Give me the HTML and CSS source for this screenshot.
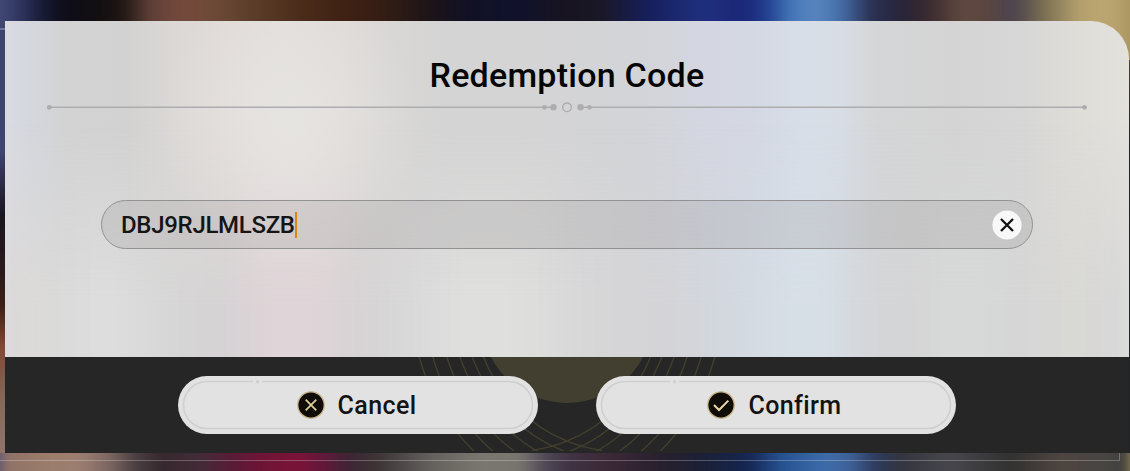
FILE: index.html
```html
<!DOCTYPE html>
<html lang="en">
<head>
    <meta charset="UTF-8">
    <title>Redemption Code</title>
    <link rel="stylesheet" href="styles.css">
</head>
<body>
    <div class="scene">
        <div class="scene-top"></div>
        <div class="scene-bottom"></div>
        <div class="scene-left"></div>
        <div class="scene-frame"></div>

        <div class="dialog">
            <div class="dialog-body">
                <h1 class="title">Redemption Code</h1>
                <svg class="divider" width="1040" height="12" viewBox="0 0 1040 12">
                    <g stroke="#adadb0" stroke-width="1.5">
                        <path d="M2 6.3H507"/>
                        <path d="M533 6.3H1038"/>
                    </g>
                    <g fill="#adadb0">
                        <circle cx="2.3" cy="6.3" r="2.4"/>
                        <circle cx="497.5" cy="6.3" r="2.4"/>
                        <circle cx="506.5" cy="6.3" r="3.2"/>
                        <circle cx="533.5" cy="6.3" r="3.2"/>
                        <circle cx="542.5" cy="6.3" r="2.4"/>
                        <circle cx="1037.5" cy="6.3" r="2.4"/>
                    </g>
                    <circle cx="520" cy="6.3" r="4.3" fill="none" stroke="#adadb0" stroke-width="1.4"/>
                </svg>

                <div class="code-field">
                    <span class="code-text">DBJ9RJLMLSZB</span>
                    <span class="caret"></span>
                    <button class="clear-btn" aria-label="Clear">
                        <svg width="30" height="30" viewBox="0 0 30 30">
                            <circle cx="15" cy="15" r="14.6" fill="#f8f8f8"/>
                            <path d="M9 9L21 21M21 9L9 21" stroke="#111" stroke-width="2.3"/>
                        </svg>
                    </button>
                </div>
            </div>

            <div class="dialog-footer">
                <svg class="orbits" width="320" height="94" viewBox="407 357 320 94">
                    <defs>
                        <clipPath id="leftArcs"><rect x="407" y="357" width="195" height="94"/></clipPath>
                        <clipPath id="rightArcs"><rect x="532" y="357" width="195" height="94"/></clipPath>
                    </defs>
                    <circle cx="567" cy="317" r="86" fill="#433f30"/>
                    <g fill="none" stroke="#423f2e" stroke-width="1.4" clip-path="url(#leftArcs)">
                        <circle cx="623" cy="302" r="211"/>
                        <circle cx="623" cy="302" r="198"/>
                        <circle cx="623" cy="302" r="184.5"/>
                        <circle cx="623" cy="302" r="172"/>
                        <circle cx="623" cy="302" r="160.5"/>
                        <circle cx="623" cy="302" r="150"/>
                    </g>
                    <g fill="none" stroke="#423f2e" stroke-width="1.4" clip-path="url(#rightArcs)">
                        <circle cx="511" cy="302" r="211"/>
                        <circle cx="511" cy="302" r="198"/>
                        <circle cx="511" cy="302" r="184.5"/>
                        <circle cx="511" cy="302" r="172"/>
                        <circle cx="511" cy="302" r="160.5"/>
                        <circle cx="511" cy="302" r="150"/>
                    </g>
                </svg>

                <button class="btn cancel">
                    <svg class="btn-line" width="360" height="58" viewBox="0 0 360 58">
                        <path d="M75 5.5H29a23.5 23.5 0 0 0 0 47H331a23.5 23.5 0 0 0 0-47H84"/>
                        <circle cx="79.5" cy="5.7" r="1.7"/>
                    </svg>
                    <svg class="btn-icon" width="28" height="28" viewBox="0 0 28 28">
                        <circle cx="14" cy="14" r="13.2" fill="#100d08" stroke="#c9b486" stroke-width="1.3"/>
                        <path d="M8.7 8.7L19.3 19.3M19.3 8.7L8.7 19.3" stroke="#e2cf9e" stroke-width="1.7"/>
                    </svg>
                    <span class="btn-label">Cancel</span>
                </button>
                <button class="btn confirm">
                    <svg class="btn-line" width="360" height="58" viewBox="0 0 360 58">
                        <path d="M74 5.5H29a23.5 23.5 0 0 0 0 47H331a23.5 23.5 0 0 0 0-47H83"/>
                        <circle cx="78.5" cy="5.7" r="1.7"/>
                    </svg>
                    <svg class="btn-icon" width="28" height="28" viewBox="0 0 28 28">
                        <circle cx="14" cy="14" r="13.2" fill="#100d08" stroke="#c9b486" stroke-width="1.3"/>
                        <path d="M7 14L12 19L21.3 9.6" fill="none" stroke="#ead7a5" stroke-width="2"/>
                    </svg>
                    <span class="btn-label">Confirm</span>
                </button>
            </div>
        </div>
    </div>
</body>
</html>
```
FILE: styles.css
```css
* {
    box-sizing: border-box;
}

body {
    margin: 0;
    font-family: Roboto, "Open Sans", sans-serif;
    overflow: hidden;
}

button {
    border: none;
    padding: 0;
    background: none;
    font-family: inherit;
    cursor: pointer;
}

svg {
    display: block;
}

/* blurred game scene behind the dialog */
.scene {
    position: relative;
    width: 1130px;
    height: 471px;
    padding: 21px 1px 18px 5px;
    overflow: hidden;
    background: linear-gradient(90deg, #454c78 0, #2f3560 20px, #151830 45px, #0e0d17 65px, #110f12 95px, #1d1412 122px, #5f4038 150px, #75493c 180px, #6d4a38 215px, #5c3e2a 250px, #4b2c1a 300px, #3e2014 350px, #331d14 385px, #1c1418 430px, #111125 470px, #10112c 520px, #171420 560px, #1a1724 600px, #161f5e 650px, #1c2a72 680px, #202f7e 705px, #1a2675 745px, #223f90 768px, #4377b8 790px, #5b86c0 815px, #4570ab 840px, #2b3154 870px, #272336 905px, #3b2b2f 930px, #604940 962px, #5b463f 985px, #4a4350 1015px, #75694f 1040px, #b5a26e 1080px, #bda672 1110px, #a8945f 1130px);
}

.scene-top {
    position: absolute;
    left: 0;
    right: 0;
    top: -30px;
    height: 150px;
    background: inherit;
    filter: blur(8px);
}

.scene-bottom {
    position: absolute;
    left: -20px;
    right: -20px;
    bottom: -30px;
    height: 130px;
    padding: 0 20px;
    background: #8f7166 linear-gradient(90deg, #8f7166 0, #9b7d6c 50px, #9b7e70 80px, #7c6661 110px, #4a3f43 135px, #35282d 162px, #422c36 200px, #5b1a37 235px, #6e1434 260px, #7a1337 300px, #60183a 325px, #3c2533 350px, #3d3637 380px, #63605d 430px, #7a7770 480px, #78756f 520px, #4f4856 545px, #3f3342 570px, #3b2836 610px, #28202e 660px, #1a2036 705px, #152653 750px, #25508f 780px, #3d6cab 825px, #3f6197 850px, #2d3b5e 875px, #33343e 900px, #48474d 950px, #313131 1010px, #4e4540 1060px, #474543 1110px, #3c3c3b 1130px) no-repeat content-box;
    filter: blur(6px);
}

.scene-left {
    position: absolute;
    left: 0;
    top: 21px;
    width: 5px;
    height: 432px;
    background: linear-gradient(#40456f 0, #3f4470 130px, #1a1420 195px, #2b1a1a 250px, #3d2015 285px, #7b4a35 325px, #85695b 380px, #907468 432px);
}

.scene-frame {
    position: absolute;
    left: -2px;
    top: 28px;
    width: 1122px;
    height: 433px;
    border: 1px solid rgba(255, 255, 255, 0.25);
    border-top-width: 2px;
    border-top-right-radius: 40px;
}

/* dark edge right of the dialog */
.scene::after {
    content: "";
    position: absolute;
    right: 0;
    top: 60px;
    width: 1px;
    height: 393px;
    background: linear-gradient(#4a3f38, #222326 80px);
}

.dialog {
    position: relative;
    height: 432px;
    display: flex;
    flex-direction: column;
    border-radius: 0 38px 0 0;
    overflow: hidden;
}

.dialog-body {
    position: relative;
    z-index: 0;
    height: 336px;
    display: flex;
    flex-direction: column;
    align-items: center;
    overflow: hidden;
    background: linear-gradient(90deg, #dbdbe2 0, #d5d7de 25px, #d3d3d3 60px, #d2d2d2 120px, #dbd8d6 170px, #e0dbd7 220px, #e1dedb 280px, #dedad7 340px, #d9d7d6 385px, #d4d4d4 440px, #d4d4d5 540px, #d3d4d8 640px, #d4d7e1 700px, #d4d8e2 750px, #d8dee7 800px, #d8dde5 835px, #d5d6d7 870px, #d4d4d4 950px, #d7d7d7 1020px, #deddd8 1070px, #e2e1dc 1124px);
}

/* lower part of the frosted panel picks up other scene colours */
.dialog-body::before {
    content: "";
    position: absolute;
    inset: 0 0 -40px;
    z-index: -1;
    background: linear-gradient(90deg, #ddd9d5 0, #dadada 50px, #dedede 105px, #d6d6d6 165px, #d5d2d4 220px, #e0d4d8 270px, #dfd4d8 310px, #d5d3d4 360px, #dbdbdb 420px, #e0e0df 470px, #dededd 520px, #d6d6d7 590px, #d4d4d7 660px, #d2d6dd 710px, #d5dce4 760px, #d8e0e7 800px, #d6dde4 830px, #d4d6d9 860px, #d4d4d5 900px, #d8d9d9 950px, #d5d6d6 1010px, #d9d8d5 1070px, #d5d6d8 1124px);
    filter: blur(12px);
    -webkit-mask-image: linear-gradient(transparent 27%, #000 76%);
    mask-image: linear-gradient(transparent 27%, #000 76%);
}

.dialog-body::after {
    content: "";
    position: absolute;
    inset: 0;
    z-index: -1;
    background: radial-gradient(ellipse 130px 150px at 285px 105px, rgba(232, 230, 228, 0.75), rgba(232, 230, 228, 0));
}

.title {
    margin: 34px 0 0;
    height: 40px;
    line-height: 40px;
    font-size: 34px;
    font-weight: 500;
    letter-spacing: 0.25px;
    color: #050505;
    white-space: nowrap;
}

.divider {
    margin-top: 6px;
}

.code-field {
    width: 932px;
    height: 49px;
    margin-top: 87px;
    padding: 0 10px 0 19px;
    display: flex;
    align-items: center;
    border: 1.5px solid #929294;
    border-radius: 25px;
    background: rgba(100, 95, 95, 0.13);
}

.code-text {
    font-size: 24px;
    font-weight: 500;
    letter-spacing: -0.3px;
    color: #151515;
    white-space: nowrap;
}

.caret {
    width: 2px;
    height: 26px;
    background: #dd8412;
}

.clear-btn {
    margin-left: auto;
}

.dialog-footer {
    position: relative;
    height: 96px;
    display: flex;
    justify-content: center;
    align-items: center;
    gap: 58px;
    background: #262626;
}

.orbits {
    position: absolute;
    left: 402px;
    top: 0;
}

.btn {
    position: relative;
    width: 360px;
    height: 58px;
    padding-right: 3px;
    display: flex;
    justify-content: center;
    align-items: center;
    gap: 13px;
    border-radius: 29px;
    background: #e2e2e2;
}

.btn-line {
    position: absolute;
    left: 0;
    top: 0;
    fill: none;
    stroke: #cfcfcf;
    stroke-width: 1.5;
}

.btn-line circle {
    fill: #cfcfcf;
    stroke: none;
}

.btn-label {
    font-size: 25px;
    font-weight: 500;
    letter-spacing: 0.4px;
    color: #131313;
}
```
